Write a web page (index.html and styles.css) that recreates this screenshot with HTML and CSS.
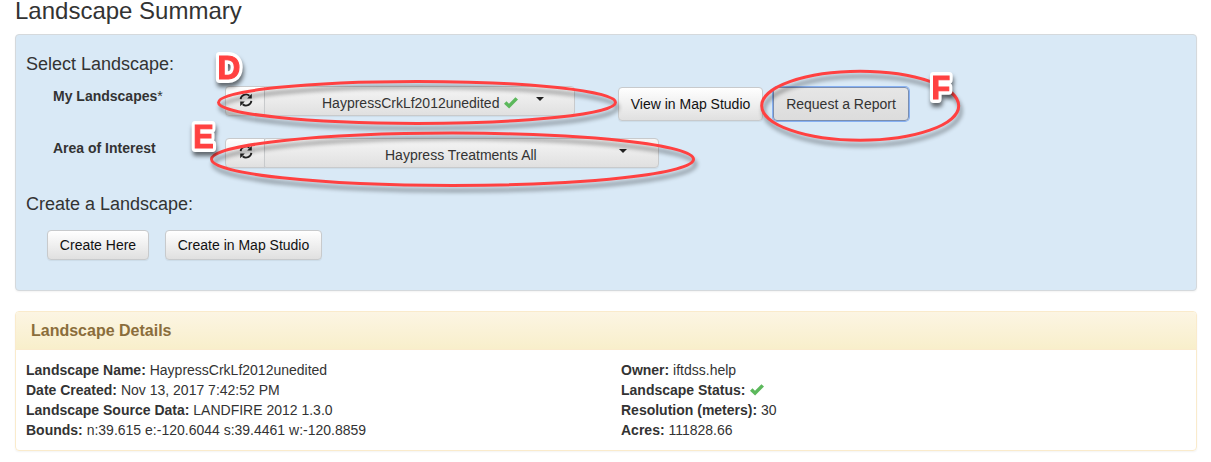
FILE: index.html
```html
<!DOCTYPE html>
<html lang="en">
<head>
<meta charset="utf-8">
<title>Landscape Summary</title>
<link rel="stylesheet" href="styles.css">
</head>
<body>
<svg class="defs" width="0" height="0">
  <symbol id="refresh" viewBox="0 0 14 14">
    <path d="M1.6 6.1A5.4 5.4 0 0 1 10.4 2.7M12.4 7.9A5.4 5.4 0 0 1 3.6 11.3" fill="none" stroke="currentColor" stroke-width="1.8"/>
    <path d="M12.8.8V5.4H8.2zM1.2 13.2V8.6H5.8z" fill="currentColor"/>
  </symbol>
  <symbol id="check" viewBox="0 0 14 12">
    <path d="M0 6.8 2.5 4.3 5 6.7 11.4.2 14 2.6 5.1 11.6z" fill="#5cb85c"/>
  </symbol>
</svg>
<main class="page">
  <h1 class="title">Landscape Summary</h1>
  <section class="panel selector">
    <h2 class="heading">Select Landscape:</h2>
    <div class="row row-landscape">
      <div class="label">My Landscapes<span class="star">*</span></div>
      <div class="group group-landscape">
        <button class="btn refresh"><svg class="icon"><use href="#refresh"/></svg></button>
        <button class="btn dropdown"><span>HaypressCrkLf2012unedited</span><svg class="check"><use href="#check"/></svg><i class="caret"></i></button>
      </div>
      <button class="btn tall view">View in Map Studio</button>
      <button class="btn tall request">Request a Report</button>
    </div>
    <div class="row row-area">
      <div class="label">Area of Interest</div>
      <div class="group group-area">
        <button class="btn refresh"><svg class="icon"><use href="#refresh"/></svg></button>
        <button class="btn dropdown"><span>Haypress Treatments All</span><i class="caret"></i></button>
      </div>
    </div>
    <h2 class="heading heading-create">Create a Landscape:</h2>
    <div class="create">
      <button class="btn create-here">Create Here</button>
      <button class="btn create-studio">Create in Map Studio</button>
    </div>
  </section>
  <section class="panel details">
    <h3 class="details-title">Landscape Details</h3>
    <div class="details-body">
      <div class="column">
        <div><b>Landscape Name:</b> HaypressCrkLf2012unedited</div>
        <div><b>Date Created:</b> Nov 13, 2017 7:42:52 PM</div>
        <div><b>Landscape Source Data:</b> LANDFIRE 2012 1.3.0</div>
        <div><b>Bounds:</b> n:39.615 e:-120.6044 s:39.4461 w:-120.8859</div>
      </div>
      <div class="column">
        <div><b>Owner:</b> iftdss.help</div>
        <div><b>Landscape Status:</b> <svg class="check status"><use href="#check"/></svg></div>
        <div><b>Resolution (meters):</b> 30</div>
        <div><b>Acres:</b> 111828.66</div>
      </div>
    </div>
  </section>
</main>
<svg class="callouts" viewBox="0 0 1211 462">
  <g class="ring">
    <ellipse cx="417" cy="102.4" rx="198.5" ry="21"/>
    <ellipse cx="452.5" cy="159.3" rx="241" ry="26.2"/>
    <ellipse cx="860.2" cy="105.8" rx="98.5" ry="34.5"/>
  </g>
  <g class="mark">
    <g transform="translate(217.6 79) scale(.93 1)"><text class="edge">D</text><text class="fill">D</text></g>
    <g transform="translate(193.3 148.2) scale(.9 1)"><text class="edge">E</text><text class="fill">E</text></g>
    <g transform="translate(931.6 99) scale(.9 1)"><text class="edge">F</text><text class="fill">F</text></g>
  </g>
</svg>
</body>
</html>
```
FILE: styles.css
```css
* { box-sizing: border-box; }
body {
  margin: 0;
  height: 462px;
  overflow: hidden;
  background: #fff;
  color: #333;
  font: 14px/20px "Liberation Sans", Arial, sans-serif;
}
.defs { display: block; }
.page { padding: 0 14px 0 15px; }
.title { margin: 0; height: 34px; font-size: 24px; font-weight: 400; line-height: 22px; }
.panel { border: 1px solid #d5d9dc; border-radius: 4px; box-shadow: 0 1px 2px rgba(0,0,0,.05); }
.selector { height: 257px; padding: 18px 10px 0; background: #d9e9f6; }
.heading { margin: 0; font-size: 18px; font-weight: 400; line-height: 22px; }
.row { display: flex; align-items: flex-start; padding-left: 27px; height: 52px; }
.row-landscape { margin-top: 11px; }
.label { width: 172px; font-weight: 700; line-height: 20px; }
.star { font-weight: 400; }
.group { display: flex; height: 30px; }
.group-landscape { width: 350px; margin-right: 43px; }
.group-area { width: 434px; }
.btn {
  display: flex;
  align-items: center;
  justify-content: center;
  height: 30px;
  margin: 0;
  padding: 0;
  border: 1px solid #c8cacc;
  border-radius: 4px;
  background: linear-gradient(#fff, #e0e0e0);
  box-shadow: 0 1px 1px rgba(0,0,0,.06);
  color: #111;
  font: inherit;
  white-space: nowrap;
}
.refresh { width: 40px; border-radius: 4px 0 0 4px; padding: 0 0 2px 1px; color: #222; }
.icon { width: 14px; height: 14px; }
.dropdown {
  flex: 1;
  justify-content: flex-start;
  margin-left: -1px;
  border-radius: 2px 4px 4px 2px;
  background: linear-gradient(#f5f5f5, #e0e0e0);
  color: #333;
  padding: 4px 0 0 57px;
}
.check { width: 14px; height: 12px; margin: -1px 0 0 5px; }
.caret {
  margin: -8px 0 0 18px;
  border: 4px solid transparent;
  border-top-color: #222;
  border-bottom: 0;
}
.group-area .caret { margin-left: 82px; }
.group-area .dropdown { padding-left: 120px; }
.tall { height: 34px; margin-top: 1px; }
.view { width: 145px; margin-right: 10px; }
.request { width: 136px; border-color: #7a8eb0; background: linear-gradient(#e6e6e6, #dcdcdc); box-shadow: 0 0 0 1px #86b0f3; color: #333; }
.heading-create { margin-top: 3px; }
.create { display: flex; gap: 16px; padding: 15px 0 0 21px; }
.create-here { width: 102px; }
.create-studio { width: 157px; }
.details { height: 140px; margin-top: 20px; border-color: #faebcc; }
.details-title {
  height: 38px;
  margin: 0;
  padding-left: 15px;
  border-bottom: 1px solid #faebcc;
  border-radius: 3px 3px 0 0;
  background: linear-gradient(#fcf5e3, #f8efcb);
  color: #8a6d3b;
  font-size: 16px;
  line-height: 37px;
}
.details-body { display: grid; grid-template-columns: 595px 1fr; padding: 10px 10px 0; }
.status { margin: 0 0 0 1px; vertical-align: -1px; }
.callouts { position: absolute; inset: 0; width: 1211px; height: 462px; pointer-events: none; }
.ring { fill: none; stroke: #ff4141; stroke-width: 3; filter: drop-shadow(2px 5px 2px rgba(0,0,0,.42)); }
.mark { font: 700 34px "Liberation Sans", Arial, sans-serif; filter: drop-shadow(1px 4px 2px rgba(0,0,0,.55)); }
.edge { fill: #fff; stroke: #fff; stroke-width: 8px; stroke-linejoin: round; }
.fill { fill: #ff4141; stroke: #ff4141; stroke-width: 1.2px; }
```
